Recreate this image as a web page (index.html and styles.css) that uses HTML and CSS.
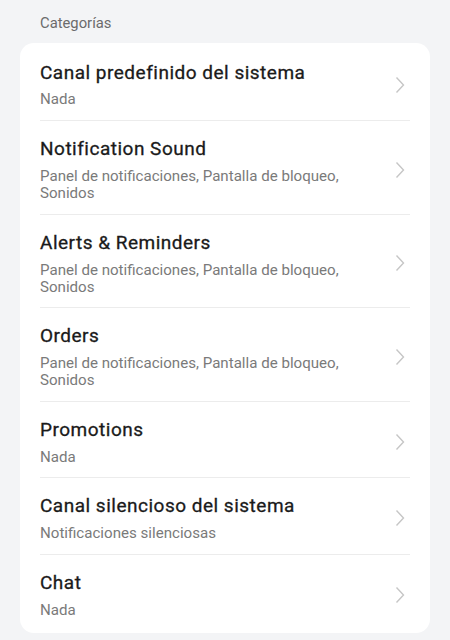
FILE: index.html
```html
<!DOCTYPE html>
<html lang="es">
<head>
    <meta charset="UTF-8">
    <meta name="viewport" content="width=device-width, initial-scale=1.0">
    <title>Categorías</title>
    <link rel="stylesheet" href="styles.css">
</head>
<body>
    <div class="page">
        <div class="group-title">Categorías</div>
        <ul class="card">
            <li class="row">
                <div class="text">
                    <div class="title">Canal predefinido del sistema</div>
                    <div class="sub">Nada</div>
                </div>
                <svg class="chev" viewBox="0 0 10 18"><path d="M1.5 1.5 L8.5 9 L1.5 16.5"/></svg>
            </li>
            <li class="row">
                <div class="text">
                    <div class="title">Notification Sound</div>
                    <div class="sub">Panel de notificaciones, Pantalla de bloqueo, Sonidos</div>
                </div>
                <svg class="chev" viewBox="0 0 10 18"><path d="M1.5 1.5 L8.5 9 L1.5 16.5"/></svg>
            </li>
            <li class="row">
                <div class="text">
                    <div class="title">Alerts &amp; Reminders</div>
                    <div class="sub">Panel de notificaciones, Pantalla de bloqueo, Sonidos</div>
                </div>
                <svg class="chev" viewBox="0 0 10 18"><path d="M1.5 1.5 L8.5 9 L1.5 16.5"/></svg>
            </li>
            <li class="row">
                <div class="text">
                    <div class="title">Orders</div>
                    <div class="sub">Panel de notificaciones, Pantalla de bloqueo, Sonidos</div>
                </div>
                <svg class="chev" viewBox="0 0 10 18"><path d="M1.5 1.5 L8.5 9 L1.5 16.5"/></svg>
            </li>
            <li class="row">
                <div class="text">
                    <div class="title">Promotions</div>
                    <div class="sub">Nada</div>
                </div>
                <svg class="chev" viewBox="0 0 10 18"><path d="M1.5 1.5 L8.5 9 L1.5 16.5"/></svg>
            </li>
            <li class="row">
                <div class="text">
                    <div class="title">Canal silencioso del sistema</div>
                    <div class="sub">Notificaciones silenciosas</div>
                </div>
                <svg class="chev" viewBox="0 0 10 18"><path d="M1.5 1.5 L8.5 9 L1.5 16.5"/></svg>
            </li>
            <li class="row">
                <div class="text">
                    <div class="title">Chat</div>
                    <div class="sub">Nada</div>
                </div>
                <svg class="chev" viewBox="0 0 10 18"><path d="M1.5 1.5 L8.5 9 L1.5 16.5"/></svg>
            </li>
        </ul>
    </div>
</body>
</html>
```

FILE: styles.css
```css
body{
    margin: 0;
    background-color: #f3f4f6;
    font-family: Roboto, "Noto Sans", sans-serif;
}
.page{
    padding: 13px 20px 0;
}
/* 分组标题 */
.group-title{
    padding-left: 20px;
    font-size: 14.8px;
    line-height: 20px;
    color: #6b6b6b;
    margin-bottom: 10px;
}
.card{
    list-style: none;
    margin: 0;
    padding: 0 20px;
    background-color: #fff;
    border-radius: 14px;
}
.row{
    display: flex;
    align-items: center;
    padding: 16px 0 11.5px;
    border-bottom: 1px solid #ececec;
}
/* 第一行稍高一点 */
.row:first-child{
    padding-top: 18px;
    padding-bottom: 12px;
}
.row:first-child .title{
    margin-bottom: 6px;
}
.row:last-child{
    padding-bottom: 14px;
    border-bottom: none;
}
.text{
    flex: 1;
    padding-right: 30px;
}
.title{
    font-size: 19px;
    letter-spacing: 0.5px;
    line-height: 24px;
    color: #1a1a1a;
    -webkit-text-stroke: 0.3px #1a1a1a;
    margin-bottom: 7px;
}
.sub{
    font-size: 15.1px;
    line-height: 17px;
    color: #7a7a7a;
}
.chev{
    width: 10px;
    height: 18px;
    margin-right: 5px;
    fill: none;
    stroke: #c6c6c6;
    stroke-width: 1.4;
}
```
